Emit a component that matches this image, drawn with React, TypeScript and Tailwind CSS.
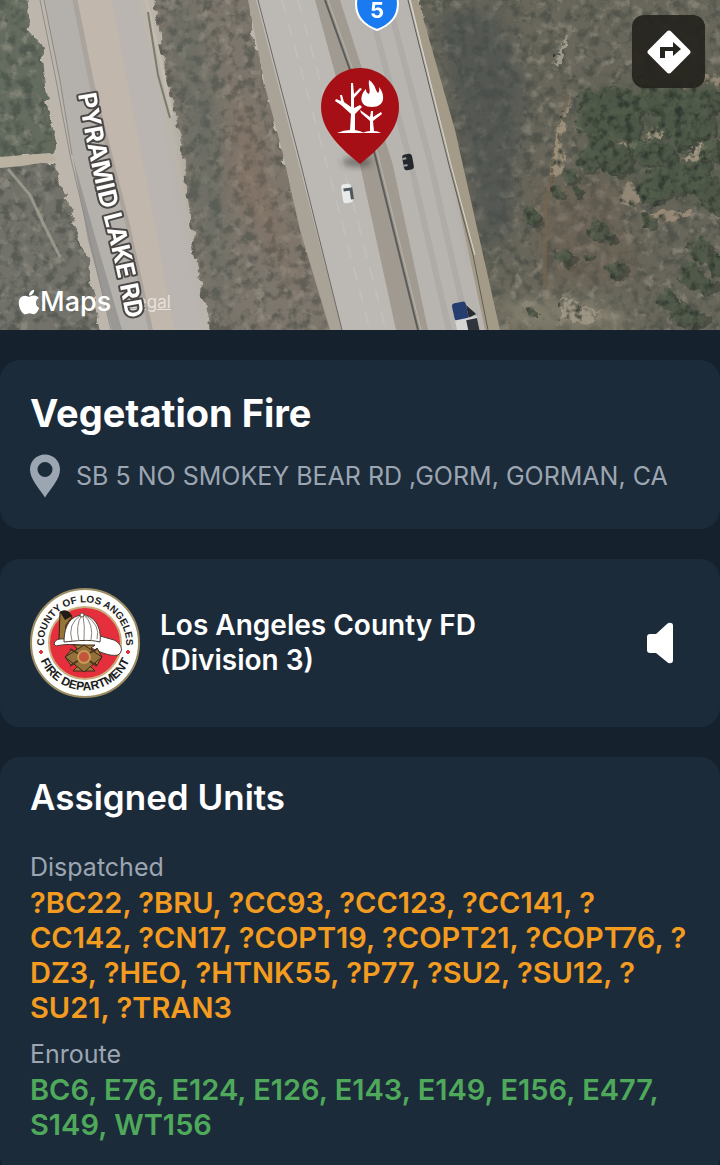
import React from "react";
import { FaApple } from "react-icons/fa";

interface UnitGroup {
  status: string;
  color: string;
  units: string[];
}

const incident = {
  type: "Vegetation Fire",
  address: "SB 5 NO SMOKEY BEAR RD ,GORM, GORMAN, CA",
  agency: "Los Angeles County FD (Division 3)",
};

const unitGroups: UnitGroup[] = [
  {
    status: "Dispatched",
    color: "text-[#f39c1f]",
    units: [
      "?BC22",
      "?BRU",
      "?CC93",
      "?CC123",
      "?CC141",
      "?CC142",
      "?CN17",
      "?COPT19",
      "?COPT21",
      "?COPT76",
      "?DZ3",
      "?HEO",
      "?HTNK55",
      "?P77",
      "?SU2",
      "?SU12",
      "?SU21",
      "?TRAN3",
    ],
  },
  {
    status: "Enroute",
    color: "text-[#4fa95a]",
    units: ["BC6", "E76", "E124", "E126", "E143", "E149", "E156", "E477", "S149", "WT156"],
  },
];

// Tree crowns east of the freeway: x, y, radius
const crowns = [
  [588, 98, 9], [592, 120, 16], [612, 100, 15], [630, 104, 14], [622, 124, 18],
  [600, 146, 15], [588, 160, 12], [616, 160, 15], [638, 146, 10], [652, 100, 14],
  [672, 98, 15], [690, 106, 16], [700, 126, 15], [668, 122, 14], [682, 136, 12],
  [646, 152, 13], [664, 156, 12], [655, 186, 16], [674, 180, 15], [648, 194, 10],
  [690, 178, 14], [704, 186, 14], [700, 166, 9], [712, 148, 12], [708, 100, 14],
  [569, 176, 7], [558, 193, 6], [531, 216, 9], [597, 230, 9], [609, 238, 5],
  [564, 257, 9], [588, 256, 4], [615, 268, 9], [648, 220, 7], [700, 250, 12],
  [716, 264, 10], [690, 275, 12], [668, 300, 10], [680, 314, 11], [696, 318, 9],
  [712, 205, 8], [706, 285, 9], [532, 312, 4], [577, 192, 5],
];

function Satellite() {
  return (
    <svg
      viewBox="0 0 720 330"
      preserveAspectRatio="xMidYMid slice"
      className="absolute inset-0 h-full w-full"
      aria-hidden="true"
    >
      <defs>
        <filter id="brush" x="-5%" y="-5%" width="110%" height="110%" colorInterpolationFilters="sRGB">
          <feTurbulence type="fractalNoise" baseFrequency="0.09" numOctaves="4" seed="4" result="n" />
          <feColorMatrix in="n" values="0 0 0 0 0.22  0 0 0 0 0.25  0 0 0 0 0.23  4 0 0 0 -1.8" result="dark" />
          <feColorMatrix in="n" values="0 0 0 0 0.64  0 0 0 0 0.61  0 0 0 0 0.56  0 4 0 0 -2.2" result="light" />
          <feDisplacementMap
            in="SourceGraphic"
            in2="n"
            scale="12"
            xChannelSelector="R"
            yChannelSelector="G"
            result="shape"
          />
          <feMerge result="all">
            <feMergeNode in="shape" />
            <feMergeNode in="dark" />
            <feMergeNode in="light" />
          </feMerge>
          <feComposite in="all" in2="shape" operator="in" result="tex" />
          <feColorMatrix in="tex" values="1 0 0 0 0  0 1 0 0 0  0 0 1 0 0  0 0 0 0.45 0" result="soft" />
          <feMerge result="out">
            <feMergeNode in="shape" />
            <feMergeNode in="soft" />
          </feMerge>
          <feGaussianBlur in="out" stdDeviation="0.6" />
        </filter>
        <filter id="ragged" x="-10%" y="-10%" width="120%" height="120%" colorInterpolationFilters="sRGB">
          <feTurbulence type="fractalNoise" baseFrequency="0.12" numOctaves="3" seed="9" result="n" />
          <feDisplacementMap
            in="SourceGraphic"
            in2="n"
            scale="12"
            xChannelSelector="R"
            yChannelSelector="G"
            result="shape"
          />
          <feColorMatrix in="n" values="0 0 0 0 0.18  0 0 0 0 0.21  0 0 0 0 0.18  3 0 0 0 -1.4" result="dark" />
          <feComposite in="dark" in2="shape" operator="in" result="shade" />
          <feMerge result="out">
            <feMergeNode in="shape" />
            <feMergeNode in="shade" />
          </feMerge>
          <feGaussianBlur in="out" stdDeviation="0.7" />
        </filter>
        <filter id="haze" x="-30%" y="-30%" width="160%" height="160%">
          <feGaussianBlur stdDeviation="9" />
        </filter>
      </defs>

      <rect width="720" height="330" fill="#bdb6ac" />

      {/* Frontage road */}
      <path d="M44 0H75L90 85 125 225 152 330H113L72 155Z" fill="#b4b1ad" />
      <path d="M73 158 96 240 122 330H112L88 240Z" fill="#999895" />
      <path d="M44 0 60 80 72 155M40 0 56 80 70 155 111 330" stroke="#8f8c87" strokeWidth="1" fill="none" />
      <path d="M75 0 92 85 128 225 151 330" stroke="#a39d97" strokeWidth="5" opacity="0.7" fill="none" />
      <path d="M78 0H112L128 85 158 225 178 330H153L130 225 95 85Z" fill="#c2b7ac" />
      <path d="M112 0H138L165 120 185 210 205 330H174L155 225 128 85Z" fill="#bab5b0" />

      {/* West brush and the dirt track */}
      <g filter="url(#brush)">
        <path d="M-20-20H24L28 30 42 48 47 100 57 145 50 153-20 158Z" fill="#646c5f" />
        <path d="M-20 168 54 162 66 200 76 228 88 258 94 300 103 350H-20Z" fill="#72726a" />
      </g>
      <path d="M0 157 50 153 58 160 22 166 0 168Z" fill="#bab1a0" />
      <path d="M8 169 30 195 44 225 60 257" stroke="#aaa698" strokeWidth="3" fill="none" opacity="0.7" />

      {/* Brush between the roads */}
      <g filter="url(#brush)">
        <path d="M150-20H246L254 40 266 90 283 150 302 230 342 350H214L198 270 190 215 179 130 165 70Z" fill="#7d766c" />
      </g>
      <g filter="url(#haze)">
        <path d="M165 0H190L220 120 230 320H220L195 200Z" fill="#56615a" opacity="0.4" />
        <path d="M235 80 260 130 290 250 310 310 280 260 230 190Z" fill="#8a6c5a" opacity="0.3" />
      </g>
      <path d="M146 0 158 50 172 115" stroke="#c4bbae" strokeWidth="3" fill="none" />
      <path d="M148 12 158 75 170 118" stroke="#5d6557" strokeWidth="2" fill="none" opacity="0.7" />

      {/* Interstate, both carriageways */}
      <path d="M248 0H258L342 330H330L300 230 282 150 266 90Z" fill="#a9a297" />
      <path d="M256 0H318L360 160 398 330H342Z" fill="#bcb9b4" />
      <path d="M315 0H352L393 165 430 330H396L360 165Z" fill="#a09a90" />
      <path d="M340 0H410L450 165 488 330H428L393 165Z" fill="#b8b5b1" />
      <path d="M282 0 327 165 370 330M298 0 343 165 386 330" stroke="#c8c5c1" strokeWidth="2" strokeDasharray="14 9" opacity="0.5" fill="none" />
      <path d="M368 0 411 165 449 330M388 0 431 165 468 330" stroke="#a7a5a2" strokeWidth="6" opacity="0.6" fill="none" />
      <path d="M325 0 350 70 375 155 418 330" stroke="#5c5d5a" strokeWidth="2" fill="none" />
      <path d="M328 0 353 70 378 155 421 330" stroke="#b9b4aa" strokeWidth="1" fill="none" />
      <path d="M258 0 301 165 342 330" stroke="#6b6862" strokeWidth="1" fill="none" />

      {/* Open ground to the east */}
      <g filter="url(#brush)">
        <path d="M416-20H750V350H502L482 275 462 190 438 100Z" fill="#69675b" />
      </g>
      <g filter="url(#haze)">
        <path d="M435 10H500L525 90 510 230 485 260 460 130Z" fill="#434d4b" opacity="0.55" />
        <path d="M530 180 620 180 640 280 550 290Z" fill="#6f5f4c" opacity="0.35" />
        <path d="M575 90 720 80V210L600 170Z" fill="#485140" opacity="0.5" />
        <path d="M500 300 600 300 640 330H505Z" fill="#9c9480" opacity="0.5" />
      </g>
      <path d="M568 95 555 150 545 210 545 290" stroke="#75644f" strokeWidth="4" opacity="0.6" fill="none" />
      <g filter="url(#ragged)" opacity="0.85">
        <path d="M570 100 562 135 566 158 558 178 550 175 556 130Z" fill="#a3967e" />
        <path d="M575 28 563 50 558 67 553 66 562 42Z" fill="#aaa595" />
        <path d="M605 135 635 140 660 124 668 128 640 148 612 146Z" fill="#a79a86" />
        <path d="M628 180 640 190 638 208 618 203 622 192Z" fill="#9b8e7b" />
        <path d="M680 160 712 132 720 138 704 164Z" fill="#a89c88" />
        <path d="M640 212 692 212 680 222 650 221Z" fill="#a08f7c" />
        <path d="M700 72 720 76V86L704 82Z" fill="#9a8e7a" />
        <path d="M560 295 600 312 585 325 560 318Z" fill="#a29a88" />
      </g>
      <g filter="url(#ragged)">
        {crowns.map(([x, y, r]) => (
          <circle key={`${x}-${y}`} cx={x + 4} cy={y + 3} r={r} fill="#333a32" opacity="0.5" />
        ))}
        {crowns.map(([x, y, r]) => (
          <circle key={`${x}-${y}`} cx={x} cy={y} r={r} fill="#535e4c" opacity="0.7" />
        ))}
      </g>
      <path d="M411 0H418L455 130 500 330H485L450 165Z" fill="#a39b88" />
      <path d="M408 0 449 165 473 255 488 330" stroke="#5c5a54" strokeWidth="1" fill="none" />
      <path d="M410 0 451 165 475 255" stroke="#dad7d0" strokeWidth="1" fill="none" />

      {/* Traffic */}
      <g transform="rotate(-8 347 193)">
        <rect x="342" y="184" width="10" height="19" rx="3" fill="#e9eaea" />
        <path d="M350 188h3v12h-3zM344 188h6v3h-6z" fill="#4f5660" />
      </g>
      <g transform="rotate(-10 408 162)">
        <rect x="403" y="154" width="10" height="16" rx="3" fill="#24272c" />
        <path d="M403 157h4v2h-4zM403 164h4v2h-4z" fill="#a6a5a2" />
      </g>
      <g transform="rotate(-12 462 315)">
        <rect x="454" y="302" width="14" height="18" rx="3" fill="#263d70" />
        <path d="M468 306 476 317 468 319Z" fill="#272b31" />
        <path d="M454 319h22v20h-22z" fill="#d6d6d4" />
        <path d="M465 321h11v18h-11z" fill="#30343d" />
      </g>
    </svg>
  );
}

function MapLabels() {
  return (
    <svg
      viewBox="0 0 720 330"
      preserveAspectRatio="xMidYMid slice"
      className="pointer-events-none absolute inset-0 h-full w-full"
    >
      <defs>
        <path id="pyramid-lake-rd" d="M78 94Q90 165 105 222T131 345" />
        <filter id="pin-shadow" x="-50%" y="-50%" width="200%" height="200%">
          <feGaussianBlur stdDeviation="3" />
        </filter>
      </defs>
      <text
        className="font-['Inter'] text-[25px] font-bold"
        fill="#fff"
        stroke="#4a4744"
        strokeWidth="4"
        strokeLinejoin="round"
        paintOrder="stroke"
      >
        <textPath href="#pyramid-lake-rd">PYRAMID LAKE RD</textPath>
      </text>

      {/* Interstate shield */}
      <path
        d="M358-8C352 12 361 24 377 30 393 24 402 12 396-8Z"
        fill="#1a7bf0"
        stroke="#fff"
        strokeWidth="2"
      />
      <text x="377" y="18" textAnchor="middle" className="font-['Inter'] text-[22px] font-bold" fill="#fff">
        5
      </text>

      {/* Incident pin */}
      <ellipse cx="357" cy="162" rx="15" ry="5" fill="#333" opacity="0.5" filter="url(#pin-shadow)" />
      <path
        d="M360 68C338 68 321 86 321 107 321 132 344 151 360 164 376 151 399 132 399 107 399 86 382 68 360 68Z"
        fill="#a50f15"
      />
      <g fill="#fff">
        <path d="M337 133Q344 130 350 130L351 114 341 105 335 101 336 99 341 101 340 95 342 95 344 102 351 107 351 83 353 83 354 94 360 88 362 89 354 98 354 108 360 105 362 107 355 114 355 130Q361 131 364 133Z" />
        <path d="M362 133Q367 131 370 131L370 121 361 113 360 110 363 112 370 117 371 111 373 111 373 117 381 112 382 114 373 121 374 131Q378 131 381 133Z" />
        <path d="M369 80C376 85 375 90 378 93 380 91 379 88 379 87 385 94 386 107 372 107 358 107 360 94 366 89 366 92 367 93 369 94 371 90 368 86 369 80Z" />
      </g>
    </svg>
  );
}

function DirectionsIcon() {
  return (
    <svg viewBox="0 0 46 46" className="h-[46px] w-[46px]" aria-hidden="true">
      <rect x="7" y="7" width="32" height="32" rx="3" transform="rotate(45 23 23)" fill="#fff" />
      <path d="M14 29V18H27V13L35 20 27 27V22H19V29Z" fill="#26241f" />
    </svg>
  );
}

function DepartmentSeal() {
  return (
    <svg viewBox="0 0 110 110" className="h-[110px] w-[110px] shrink-0" role="img" aria-label="County of Los Angeles Fire Department seal">
      <defs>
        <path id="seal-top" d="M16 68A41 41 0 1 1 94 68" />
        <path id="seal-bottom" d="M8 64A48 48 0 0 0 102 64" />
      </defs>
      <circle cx="55" cy="55" r="54" fill="#fdfdfb" stroke="#9c8c63" strokeWidth="2" />
      <circle cx="55" cy="55" r="36" fill="#e62f3c" stroke="#c9ab7c" strokeWidth="2" />
      <g className="font-['Liberation_Sans'] font-bold" fill="#1c1c1c">
        <text textAnchor="middle" className="text-[10px]">
          <textPath href="#seal-top" startOffset="50%">COUNTY OF LOS ANGELES</textPath>
        </text>
        <text textAnchor="middle" className="text-[12px]">
          <textPath href="#seal-bottom" startOffset="50%">FIRE DEPARTMENT</textPath>
        </text>
      </g>
      <path d="M11 62l2 2-2 2-2-2zM98 62l2 2-2 2-2-2z" fill="#dd3341" stroke="#dd3341" />

      {/* Helmet */}
      <path d="M30 24Q38 20 42 29L36 37 34 57 29 52Z" fill="#937536" stroke="#2b2419" strokeWidth="1" />
      <path d="M30 24Q38 20 42 28L35 32Z" fill="#211c17" />
      <path d="M34 51C25 50 22 56 26 58 34 56 44 56 57 58 68 63 79 69 88 67 95 62 90 55 84 52L70 48Z" fill="#fff" stroke="#473c32" strokeWidth="1" />
      <path d="M34 54C34 37 41 28 52 27 64 27 72 39 70 54 59 51 45 53 34 54Z" fill="#fff" stroke="#473c32" strokeWidth="1" />
      <path d="M51 27Q37 36 42 53M52 27Q45 37 49 53M53 27Q55 38 54 52M54 27Q64 36 61 52M55 27Q71 37 67 51" fill="none" stroke="#8b837b" strokeWidth="1" />
      <circle cx="52" cy="27" r="2" fill="#fff" stroke="#594e45" strokeWidth="1" />

      {/* Badge */}
      <path d="M35 69 42 61 45 65 47 60 43 57H65L61 60 64 65 67 60 72 69 67 77 63 73 60 78 65 83H43L48 78 45 73 41 77Z" fill="#a67b3c" stroke="#38281a" strokeWidth="1" />
      <path d="M35 69 54 57 72 69 54 84Z" fill="#94703a" stroke="#38281a" strokeWidth="1" />
      <path d="M40 61 49 66M67 61 58 66M40 78 49 72M67 78 58 72" stroke="#4b361f" strokeWidth="2" />
      <circle cx="54" cy="69" r="6" fill="#c4553c" stroke="#c49b55" strokeWidth="2" />
    </svg>
  );
}

export default function App() {
  return (
    <main className="min-h-screen bg-[#15212c] font-['Inter',sans-serif] text-white">
      <section aria-label="Incident map" className="relative h-[330px] overflow-hidden">
        <Satellite />
        <div className="absolute bottom-3 left-[18px] flex items-center">
          <FaApple className="h-7 w-[22px]" />
          <span className="text-[27px] leading-8 font-medium">Maps</span>
          <a href="#legal" className="ml-4 text-[17px] leading-5 text-white/60 underline">
            Legal
          </a>
        </div>
        <MapLabels />
        <button
          type="button"
          aria-label="Directions"
          className="absolute top-[15px] right-[15px] flex h-[73px] w-[73px] items-center justify-center rounded-xl bg-[#23211c]/90"
        >
          <DirectionsIcon />
        </button>
      </section>

      <div className="mt-[30px] flex flex-col gap-[30px]">
        <section className="rounded-[20px] bg-[#1c2b3a] px-[30px] pt-[27px] pb-[30px]">
          <h1 className="text-[38px] leading-[52px] font-bold">{incident.type}</h1>
          <p className="mt-3.5 flex items-center gap-4 text-[#9ca6b2]">
            <svg viewBox="0 0 32 46" className="h-[46px] w-[30px] shrink-0" fill="currentColor" aria-hidden="true">
              <path
                fillRule="evenodd"
                d="M16 0C7 0 0 7 0 16 0 26 9 35 16 46 23 35 32 26 32 16 32 7 25 0 16 0ZM16 8A8 8 0 1 1 16 24 8 8 0 0 1 16 8Z"
              />
            </svg>
            <span className="text-[25px] leading-8">{incident.address}</span>
          </p>
        </section>

        <section className="flex items-center gap-5 rounded-[20px] bg-[#1c2b3a] px-[30px] py-[29px]">
          <DepartmentSeal />
          <h2 className="max-w-[360px] text-[28px] leading-[35px] font-semibold">{incident.agency}</h2>
          <button type="button" aria-label="Listen to radio" className="mr-4 ml-auto">
            <svg viewBox="0 0 28 42" className="h-[42px] w-7" fill="#fff" aria-hidden="true">
              <path d="M4 12H10L21 2Q23 0 25 1 27 1 27 4V38Q27 41 25 41 23 42 21 40L10 31H4Q1 31 1 28V15Q1 12 4 12Z" />
            </svg>
          </button>
        </section>

        <section className="rounded-[20px] bg-[#1c2b3a] px-[30px] pt-3.5 pb-[34px]">
          <h2 className="mb-[27px] text-[35px] leading-[52px] font-semibold">Assigned Units</h2>
          <div className="flex flex-col gap-3">
            {unitGroups.map((group) => (
              <div key={group.status}>
                <h3 className="text-[25px] leading-[35px] text-[#9ca6b2]">{group.status}</h3>
                <p className={`text-[29px] leading-[35px] font-semibold ${group.color}`}>
                  {group.units.join(", ")}
                </p>
              </div>
            ))}
          </div>
        </section>
      </div>
    </main>
  );
}
